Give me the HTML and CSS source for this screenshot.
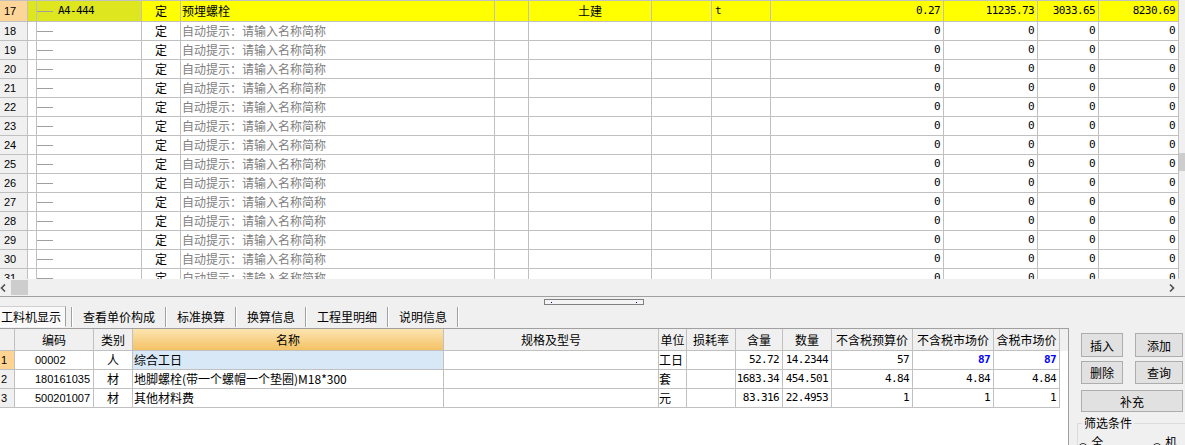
FILE: index.html
```html
<!DOCTYPE html>
<html lang="zh-CN">
<head>
<meta charset="utf-8">
<title>工料机</title>
<link rel="stylesheet" href="styles.css">
</head>
<body>
<div class="top">
  <div class="grid">
    <div class="row first sel">
      <div class="c w0 rn rn-sel">17</div><div class="c w1 lime"></div><div class="c w2 lime"><span class="dash"></span><span class="mono code">A4-444</span></div><div class="c w3 ctr yel">定</div><div class="c w4 yel name">预埋螺栓</div><div class="c w5 yel"></div><div class="c w6 ctr yel">土建</div><div class="c w7 yel"></div><div class="c w8 yel mono unit">t</div><div class="c w9 yel num">0.27</div><div class="c w10 yel num">11235.73</div><div class="c w11 yel num">3033.65</div><div class="c w12 yel num">8230.69</div>
    </div>
    <div class="row"><div class="c w0 rn">18</div><div class="c w1"></div><div class="c w2"><span class="dash"></span></div><div class="c w3 ctr">定</div><div class="c w4 name hint">自动提示：请输入名称简称</div><div class="c w5"></div><div class="c w6"></div><div class="c w7"></div><div class="c w8"></div><div class="c w9 num">0</div><div class="c w10 num">0</div><div class="c w11 num">0</div><div class="c w12 num">0</div></div>
    <div class="row"><div class="c w0 rn">19</div><div class="c w1"></div><div class="c w2"><span class="dash"></span></div><div class="c w3 ctr">定</div><div class="c w4 name hint">自动提示：请输入名称简称</div><div class="c w5"></div><div class="c w6"></div><div class="c w7"></div><div class="c w8"></div><div class="c w9 num">0</div><div class="c w10 num">0</div><div class="c w11 num">0</div><div class="c w12 num">0</div></div>
    <div class="row"><div class="c w0 rn">20</div><div class="c w1"></div><div class="c w2"><span class="dash"></span></div><div class="c w3 ctr">定</div><div class="c w4 name hint">自动提示：请输入名称简称</div><div class="c w5"></div><div class="c w6"></div><div class="c w7"></div><div class="c w8"></div><div class="c w9 num">0</div><div class="c w10 num">0</div><div class="c w11 num">0</div><div class="c w12 num">0</div></div>
    <div class="row"><div class="c w0 rn">21</div><div class="c w1"></div><div class="c w2"><span class="dash"></span></div><div class="c w3 ctr">定</div><div class="c w4 name hint">自动提示：请输入名称简称</div><div class="c w5"></div><div class="c w6"></div><div class="c w7"></div><div class="c w8"></div><div class="c w9 num">0</div><div class="c w10 num">0</div><div class="c w11 num">0</div><div class="c w12 num">0</div></div>
    <div class="row"><div class="c w0 rn">22</div><div class="c w1"></div><div class="c w2"><span class="dash"></span></div><div class="c w3 ctr">定</div><div class="c w4 name hint">自动提示：请输入名称简称</div><div class="c w5"></div><div class="c w6"></div><div class="c w7"></div><div class="c w8"></div><div class="c w9 num">0</div><div class="c w10 num">0</div><div class="c w11 num">0</div><div class="c w12 num">0</div></div>
    <div class="row"><div class="c w0 rn">23</div><div class="c w1"></div><div class="c w2"><span class="dash"></span></div><div class="c w3 ctr">定</div><div class="c w4 name hint">自动提示：请输入名称简称</div><div class="c w5"></div><div class="c w6"></div><div class="c w7"></div><div class="c w8"></div><div class="c w9 num">0</div><div class="c w10 num">0</div><div class="c w11 num">0</div><div class="c w12 num">0</div></div>
    <div class="row"><div class="c w0 rn">24</div><div class="c w1"></div><div class="c w2"><span class="dash"></span></div><div class="c w3 ctr">定</div><div class="c w4 name hint">自动提示：请输入名称简称</div><div class="c w5"></div><div class="c w6"></div><div class="c w7"></div><div class="c w8"></div><div class="c w9 num">0</div><div class="c w10 num">0</div><div class="c w11 num">0</div><div class="c w12 num">0</div></div>
    <div class="row"><div class="c w0 rn">25</div><div class="c w1"></div><div class="c w2"><span class="dash"></span></div><div class="c w3 ctr">定</div><div class="c w4 name hint">自动提示：请输入名称简称</div><div class="c w5"></div><div class="c w6"></div><div class="c w7"></div><div class="c w8"></div><div class="c w9 num">0</div><div class="c w10 num">0</div><div class="c w11 num">0</div><div class="c w12 num">0</div></div>
    <div class="row"><div class="c w0 rn">26</div><div class="c w1"></div><div class="c w2"><span class="dash"></span></div><div class="c w3 ctr">定</div><div class="c w4 name hint">自动提示：请输入名称简称</div><div class="c w5"></div><div class="c w6"></div><div class="c w7"></div><div class="c w8"></div><div class="c w9 num">0</div><div class="c w10 num">0</div><div class="c w11 num">0</div><div class="c w12 num">0</div></div>
    <div class="row"><div class="c w0 rn">27</div><div class="c w1"></div><div class="c w2"><span class="dash"></span></div><div class="c w3 ctr">定</div><div class="c w4 name hint">自动提示：请输入名称简称</div><div class="c w5"></div><div class="c w6"></div><div class="c w7"></div><div class="c w8"></div><div class="c w9 num">0</div><div class="c w10 num">0</div><div class="c w11 num">0</div><div class="c w12 num">0</div></div>
    <div class="row"><div class="c w0 rn">28</div><div class="c w1"></div><div class="c w2"><span class="dash"></span></div><div class="c w3 ctr">定</div><div class="c w4 name hint">自动提示：请输入名称简称</div><div class="c w5"></div><div class="c w6"></div><div class="c w7"></div><div class="c w8"></div><div class="c w9 num">0</div><div class="c w10 num">0</div><div class="c w11 num">0</div><div class="c w12 num">0</div></div>
    <div class="row"><div class="c w0 rn">29</div><div class="c w1"></div><div class="c w2"><span class="dash"></span></div><div class="c w3 ctr">定</div><div class="c w4 name hint">自动提示：请输入名称简称</div><div class="c w5"></div><div class="c w6"></div><div class="c w7"></div><div class="c w8"></div><div class="c w9 num">0</div><div class="c w10 num">0</div><div class="c w11 num">0</div><div class="c w12 num">0</div></div>
    <div class="row"><div class="c w0 rn">30</div><div class="c w1"></div><div class="c w2"><span class="dash"></span></div><div class="c w3 ctr">定</div><div class="c w4 name hint">自动提示：请输入名称简称</div><div class="c w5"></div><div class="c w6"></div><div class="c w7"></div><div class="c w8"></div><div class="c w9 num">0</div><div class="c w10 num">0</div><div class="c w11 num">0</div><div class="c w12 num">0</div></div>
    <div class="row"><div class="c w0 rn">31</div><div class="c w1"></div><div class="c w2"><span class="dash"></span></div><div class="c w3 ctr">定</div><div class="c w4 name hint">自动提示：请输入名称简称</div><div class="c w5"></div><div class="c w6"></div><div class="c w7"></div><div class="c w8"></div><div class="c w9 num">0</div><div class="c w10 num">0</div><div class="c w11 num">0</div><div class="c w12 num">0</div></div>
  </div>
  <div class="vscroll"><div class="vthumb"></div></div>
</div>
<div class="hscroll">
  <span class="arr"><svg width="6" height="8" viewBox="0 0 6 8"><polyline points="5,0.5 1.5,4 5,7.5" fill="none" stroke="#505050" stroke-width="1.6"/></svg></span>
  <span class="hthumb"></span>
  <span class="hspace"></span>
  <span class="arr"><svg width="6" height="8" viewBox="0 0 6 8"><polyline points="1,0.5 4.5,4 1,7.5" fill="none" stroke="#505050" stroke-width="1.6"/></svg></span>
</div>
<div class="splitter"><div class="handle"><span class="dot"></span><span class="dot"></span></div></div>
<div class="tabs">
  <div class="tab active">工料机显示</div>
  <span class="sep"></span><div class="tab">查看单价构成</div>
  <span class="sep"></span><div class="tab">标准换算</div>
  <span class="sep"></span><div class="tab">换算信息</div>
  <span class="sep"></span><div class="tab">工程里明细</div>
  <span class="sep"></span><div class="tab">说明信息</div>
  <span class="sep"></span>
</div>
<div class="bottom">
  <div class="sub">
    <div class="srow shead">
      <div class="s v0"></div><div class="s v1 ctr">编码</div><div class="s v2 ctr">类别</div><div class="s v3 ctr hl">名称</div><div class="s v4 ctr">规格及型号</div><div class="s v5 ctr">单位</div><div class="s v6 ctr">损耗率</div><div class="s v7 ctr">含量</div><div class="s v8 ctr">数量</div><div class="s v9 ctr">不含税预算价</div><div class="s v10 ctr">不含税市场价</div><div class="s v11 ctr">含税市场价</div>
    </div>
    <div class="srow">
      <div class="s v0 srn srn-sel">1</div><div class="s v1 scode">00002</div><div class="s v2 ctr">人</div><div class="s v3 sname cur">综合工日</div><div class="s v4"></div><div class="s v5 sunit">工日</div><div class="s v6"></div><div class="s v7 num">52.72</div><div class="s v8 num">14.2344</div><div class="s v9 num">57</div><div class="s v10 num blue">87</div><div class="s v11 num blue">87</div>
    </div>
    <div class="srow">
      <div class="s v0 srn">2</div><div class="s v1 scode">180161035</div><div class="s v2 ctr">材</div><div class="s v3 sname">地脚螺栓(带一个螺帽一个垫圈)M18*300</div><div class="s v4"></div><div class="s v5 sunit">套</div><div class="s v6"></div><div class="s v7 num">1683.34</div><div class="s v8 num">454.501</div><div class="s v9 num">4.84</div><div class="s v10 num">4.84</div><div class="s v11 num">4.84</div>
    </div>
    <div class="srow">
      <div class="s v0 srn">3</div><div class="s v1 scode">500201007</div><div class="s v2 ctr">材</div><div class="s v3 sname">其他材料费</div><div class="s v4"></div><div class="s v5 sunit">元</div><div class="s v6"></div><div class="s v7 num">83.316</div><div class="s v8 num">22.4953</div><div class="s v9 num">1</div><div class="s v10 num">1</div><div class="s v11 num">1</div>
    </div>
  </div>
  <div class="side">
    <div class="brow b1"><button class="btn bn-a">插入</button><button class="btn bn-b">添加</button></div>
    <div class="brow b2"><button class="btn bn-a">删除</button><button class="btn bn-b">查询</button></div>
    <div class="brow b3"><button class="btn bn-w">补充</button></div>
    <fieldset class="filter">
      <legend>筛选条件</legend>
      <div class="radios">
        <span class="radio"><span class="circle"></span>全部</span>
        <span class="radio r2"><span class="circle"></span>机械</span>
      </div>
    </fieldset>
  </div>
</div>
</body>
</html>
```

FILE: styles.css
```css
* { box-sizing: border-box; }
html, body { margin: 0; padding: 0; }
body {
  width: 1185px;
  height: 445px;
  overflow: hidden;
  background: #f0f0f0;
  font-family: "Noto Sans CJK SC", sans-serif;
  font-size: 12px;
  color: #000;
}

/* ---------- top grid ---------- */
.top { display: flex; height: 279px; }
.grid {
  width: 1179px;
  height: 279px;
  overflow: hidden;
  background: #fff;
  border-top: 1px solid #c0c0c0;
  flex: none;
}
.row { display: flex; height: 19px; border-bottom: 1px solid #c0c0c0; }
.row.first { height: 21px; }
.c {
  flex: none;
  height: 100%;
  border-right: 1px solid #c0c0c0;
  display: flex;
  align-items: center;
  white-space: nowrap;
  overflow: hidden;
  line-height: 16px;
}
.w0 { width: 28px; } .w1 { width: 9px; } .w2 { width: 105px; } .w3 { width: 39px; }
.w4 { width: 314px; } .w5 { width: 34px; } .w6 { width: 123px; } .w7 { width: 60px; }
.w8 { width: 59px; } .w9 { width: 173px; } .w10 { width: 94px; } .w11 { width: 61px; } .w12 { width: 80px; }

.rn {
  background: #f0f0f0;
  font-family: "Liberation Sans", sans-serif;
  font-size: 11px;
  padding-left: 4px;
}
.rn-sel { background: #fdd598; }
.lime { background: #dde61f; }
.yel { background: #ffff00; }
.ctr { justify-content: center; }
.name { padding-left: 1px; }
.hint { color: #808080; }
.dash { width: 16px; height: 1px; background: #a0a0a0; flex: none; }
.code { margin-left: 5px; }
.unit { padding-left: 3px; }

.mono, .num {
  font-family: "DejaVu Sans Mono", monospace;
  font-size: 11px;
  letter-spacing: -0.6px;
}
.num { justify-content: flex-end; padding-right: 3px; }

.vscroll { flex: 1; background: #f0f0f0; padding-top: 153px; }
.vthumb { height: 18px; background: #cdcdcd; }

/* ---------- horizontal scrollbar ---------- */
.hscroll {
  height: 18px;
  border-bottom: 1px solid #a0a0a0;
  display: flex;
  align-items: center;
}
.arr { width: 11px; height: 17px; display: flex; align-items: center; padding-left: 0; }
.arr svg { display: block; }
.hthumb { width: 17px; height: 15px; background: #cdcdcd; }
.hspace { flex: 1; }
.hscroll .arr:last-child { margin-right: 8px; justify-content: center; }

/* ---------- splitter ---------- */
.splitter { height: 8px; padding-top: 2px; }
.handle {
  margin-left: 544px;
  width: 100px;
  height: 6px;
  border: 1px solid #808080;
  background: #f4f4f4;
  display: flex;
  align-items: center;
  justify-content: space-between;
  padding: 0 6px;
}
.dot { width: 1px; height: 1px; background: #000080; }

/* ---------- tabs ---------- */
.tabs { height: 23px; display: flex; align-items: center; }
.tab { padding: 0 10px; line-height: 16px; white-space: nowrap; }
.tab.active {
  width: 66px;
  height: 21px;
  padding: 0 0 0 1px;
  margin-right: 5px;
  display: flex;
  align-items: center;
  background: #f9f9f9;
  border-top: 1px solid #d0d0d0;
  border-right: 1px solid #a0a0a0;
  border-bottom: 1px solid #ffffff;
}
.sep { width: 2px; height: 20px; border-left: 1px solid #a0a0a0; border-right: 1px solid #ffffff; flex: none; }

/* ---------- bottom ---------- */
.bottom { display: flex; height: 117px; }
.sub {
  width: 1069px;
  flex: none;
  background: #fff;
  border-top: 1px solid #a0a0a0;
  border-right: 1px solid #a0a0a0;
}
.srow { display: flex; height: 19px; }
.srow .s { border-bottom: 1px solid #c0c0c0; }
.shead { height: 22px; background: #f0f0f0; }
.s {
  flex: none;
  height: 100%;
  border-right: 1px solid #c0c0c0;
  display: flex;
  align-items: center;
  white-space: nowrap;
  overflow: hidden;
  line-height: 16px;
}
.v0 { width: 15px; } .v1 { width: 79px; } .v2 { width: 39px; } .v3 { width: 311px; }
.v4 { width: 215px; } .v5 { width: 28px; } .v6 { width: 49px; } .v7 { width: 47px; }
.v8 { width: 49px; } .v9 { width: 81px; } .v10 { width: 81px; } .v11 { width: 66px; }
.shead .s { background: #f0f0f0; }
.shead .hl { background: linear-gradient(#fce4b0, #f4c265); }
.srn {
  background: #f0f0f0;
  font-family: "Liberation Sans", sans-serif;
  font-size: 11px;
  padding-left: 1px;
}
.srn-sel { background: #ffd492; }
.scode { font-family: "Liberation Sans", sans-serif; font-size: 11px; padding-left: 20px; }
.sname { padding-left: 1px; }
.cur { background: #d9e8f7; }
.sunit { padding-left: 0; }
.blue { color: #0000ff; font-weight: bold; }

/* ---------- side panel ---------- */
.side { flex: 1; padding: 5px 0 0 12px; }
.brow { display: flex; gap: 12px; }
.b1 { height: 24px; }
.b2 { height: 23px; margin-top: 4px; }
.b3 { height: 22px; margin-top: 6px; }
.btn {
  margin: 0;
  padding: 0;
  font-family: "Noto Sans CJK SC", sans-serif;
  font-size: 12px;
  color: #000;
  background: #e1e1e1;
  border: 1px solid #adadad;
  height: 100%;
}
.bn-a { width: 42px; }
.bn-b { width: 48px; }
.bn-w { width: 102px; }
.filter {
  margin: 4px 0 0 -4px;
  padding: 5px 0 0 0;
  border: 1px solid #dcdcdc;
  border-right: none;
  height: 40px;
  min-width: 0;
}
.filter legend { padding: 0 2px; margin-left: 4px; font-size: 12px; line-height: 14px; }
.radios { display: flex; }
.radio { display: flex; align-items: center; gap: 3px; line-height: 14px; }
.r2 { margin-left: 41px; }
.circle { width: 12px; height: 12px; border: 1px solid #333; border-radius: 50%; background: #fff; }
```
